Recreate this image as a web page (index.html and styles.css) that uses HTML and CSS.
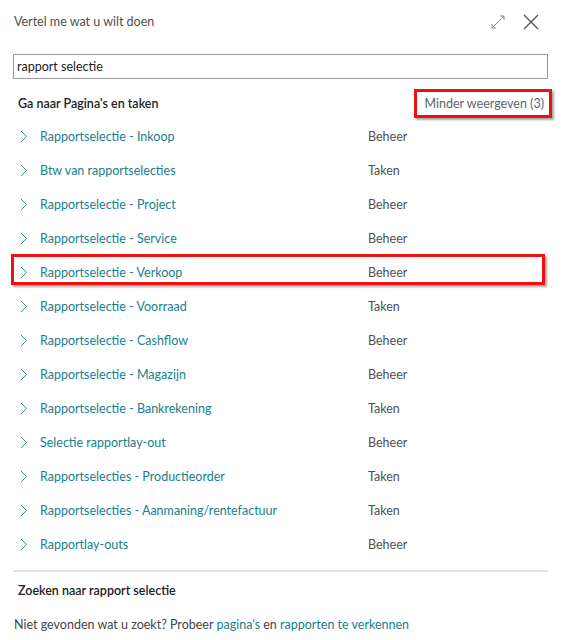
FILE: index.html
```html
<!DOCTYPE html>
<html lang="nl">
<head>
<meta charset="utf-8">
<title>Vertel me wat u wilt doen</title>
<link rel="stylesheet" href="styles.css">
</head>
<body>
<div class="dialog">
  <div class="topbar">
    <span class="title">Vertel me wat u wilt doen</span>
    <div class="tools">
      <svg class="ico" width="16" height="16" viewBox="0 0 16 16"><path d="M2 14 L14 2 M10 2 H14 V6 M2 10 V14 H6" fill="none" stroke="#888" stroke-width="1"/></svg>
      <svg class="ico close" width="18" height="18" viewBox="0 0 18 18"><path d="M2 2 L16 16 M16 2 L2 16" fill="none" stroke="#555" stroke-width="1.4"/></svg>
    </div>
  </div>
  <div class="search"><input class="input" type="text" value="rapport selectie"></div>
  <div class="sechead">
    <span class="sectitle">Ga naar Pagina's en taken</span>
    <span class="less">Minder weergeven (3)</span>
  </div>
  <ul class="list">
    <li class="row"><svg class="chev" width="8" height="13" viewBox="0 0 8 13"><path d="M1 1 L6.5 6.5 L1 12" fill="none" stroke="#3a8f96" stroke-width="1"/></svg><span class="name">Rapportselectie - Inkoop</span><span class="cat">Beheer</span></li>
    <li class="row"><svg class="chev" width="8" height="13" viewBox="0 0 8 13"><path d="M1 1 L6.5 6.5 L1 12" fill="none" stroke="#3a8f96" stroke-width="1"/></svg><span class="name">Btw van rapportselecties</span><span class="cat">Taken</span></li>
    <li class="row"><svg class="chev" width="8" height="13" viewBox="0 0 8 13"><path d="M1 1 L6.5 6.5 L1 12" fill="none" stroke="#3a8f96" stroke-width="1"/></svg><span class="name">Rapportselectie - Project</span><span class="cat">Beheer</span></li>
    <li class="row"><svg class="chev" width="8" height="13" viewBox="0 0 8 13"><path d="M1 1 L6.5 6.5 L1 12" fill="none" stroke="#3a8f96" stroke-width="1"/></svg><span class="name">Rapportselectie - Service</span><span class="cat">Beheer</span></li>
    <li class="row marked"><svg class="chev" width="8" height="13" viewBox="0 0 8 13"><path d="M1 1 L6.5 6.5 L1 12" fill="none" stroke="#3a8f96" stroke-width="1"/></svg><span class="name">Rapportselectie - Verkoop</span><span class="cat">Beheer</span></li>
    <li class="row"><svg class="chev" width="8" height="13" viewBox="0 0 8 13"><path d="M1 1 L6.5 6.5 L1 12" fill="none" stroke="#3a8f96" stroke-width="1"/></svg><span class="name">Rapportselectie - Voorraad</span><span class="cat">Taken</span></li>
    <li class="row"><svg class="chev" width="8" height="13" viewBox="0 0 8 13"><path d="M1 1 L6.5 6.5 L1 12" fill="none" stroke="#3a8f96" stroke-width="1"/></svg><span class="name">Rapportselectie - Cashflow</span><span class="cat">Beheer</span></li>
    <li class="row"><svg class="chev" width="8" height="13" viewBox="0 0 8 13"><path d="M1 1 L6.5 6.5 L1 12" fill="none" stroke="#3a8f96" stroke-width="1"/></svg><span class="name">Rapportselectie - Magazijn</span><span class="cat">Beheer</span></li>
    <li class="row"><svg class="chev" width="8" height="13" viewBox="0 0 8 13"><path d="M1 1 L6.5 6.5 L1 12" fill="none" stroke="#3a8f96" stroke-width="1"/></svg><span class="name">Rapportselectie - Bankrekening</span><span class="cat">Taken</span></li>
    <li class="row"><svg class="chev" width="8" height="13" viewBox="0 0 8 13"><path d="M1 1 L6.5 6.5 L1 12" fill="none" stroke="#3a8f96" stroke-width="1"/></svg><span class="name">Selectie rapportlay-out</span><span class="cat">Beheer</span></li>
    <li class="row"><svg class="chev" width="8" height="13" viewBox="0 0 8 13"><path d="M1 1 L6.5 6.5 L1 12" fill="none" stroke="#3a8f96" stroke-width="1"/></svg><span class="name">Rapportselecties - Productieorder</span><span class="cat">Taken</span></li>
    <li class="row"><svg class="chev" width="8" height="13" viewBox="0 0 8 13"><path d="M1 1 L6.5 6.5 L1 12" fill="none" stroke="#3a8f96" stroke-width="1"/></svg><span class="name">Rapportselecties - Aanmaning/rentefactuur</span><span class="cat">Taken</span></li>
    <li class="row"><svg class="chev" width="8" height="13" viewBox="0 0 8 13"><path d="M1 1 L6.5 6.5 L1 12" fill="none" stroke="#3a8f96" stroke-width="1"/></svg><span class="name">Rapportlay-outs</span><span class="cat">Beheer</span></li>
  </ul>
  <div class="sep"></div>
  <div class="zoek">Zoeken naar rapport selectie</div>
  <div class="foot">Niet gevonden wat u zoekt? Probeer <span class="lnk">pagina's</span> en <span class="lnk">rapporten te verkennen</span></div>
</div>
</body>
</html>
```
FILE: styles.css
```css
* { box-sizing: border-box; }
html, body { margin: 0; padding: 0; background: #fff; }
body {
  font-family: Lato, "Open Sans", "Noto Sans", sans-serif;
  font-size: 12.5px;
  color: #444;
}
.dialog {
  width: 564px;
  height: 640px;
  display: flex;
  flex-direction: column;
}
.topbar {
  height: 44px;
  display: flex;
  align-items: center;
  justify-content: space-between;
  padding: 0 24px 0 14px;
}
.title { color: #505050; font-size: 12.5px; }
.tools { display: flex; align-items: center; gap: 16px; }
.ico { display: block; }
.search { padding: 10px 16px 0 13px; }
.input {
  display: block;
  width: 100%;
  height: 25px;
  border: 1px solid #9a9a9a;
  padding: 0 3px;
  font: inherit;
  font-size: 12.5px;
  color: #222;
  outline: none;
  background: #fff;
}
.sechead {
  height: 41px;
  display: flex;
  align-items: center;
  justify-content: space-between;
  padding: 8px 12px 0 18px;
}
.sectitle { color: #222; font-weight: 600; font-size: 12.5px; }
.less {
  position: relative;
  display: inline-flex;
  align-items: center;
  height: 23px;
  color: #5a6470;
  padding: 0 8px 0 11px;
}
.less::after {
  content: "";
  position: absolute;
  left: 0; top: -3px; right: 0; bottom: -3px;
  border: 3px solid #f01010;
  box-shadow: 2px 2px 2px rgba(0,0,0,0.35);
}
.list { list-style: none; margin: 0; padding: 0; }
.row {
  position: relative;
  height: 34px;
  display: flex;
  align-items: center;
  padding-left: 20px;
}
.chev { flex: none; margin-right: 12px; }
.name { width: 328px; color: #17808a; }
.cat { color: #505050; }
.marked::after {
  content: "";
  position: absolute;
  left: 11px; top: -1px; right: 19px; bottom: 4px;
  border: 3px solid #f01010;
  box-shadow: 2px 2px 2px rgba(0,0,0,0.35);
}
.sep {
  margin: 9px 16px 0 13px;
  height: 2px;
  background: #e3e3e3;
}
.zoek {
  height: 36px;
  display: flex;
  align-items: center;
  padding-left: 18px;
  color: #222;
  font-weight: 600;
}
.foot {
  height: 32px;
  display: flex;
  align-items: center;
  padding-left: 14px;
  color: #444;
  white-space: pre;
}
.lnk { color: #17808a; }
```
